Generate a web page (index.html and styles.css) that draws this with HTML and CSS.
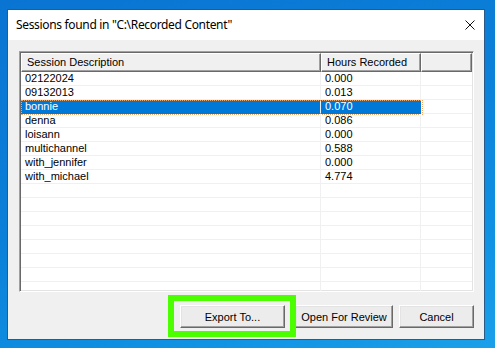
FILE: index.html
```html
<!DOCTYPE html>
<html>
<head>
<meta charset="utf-8">
<link rel="stylesheet" href="styles.css">
</head>
<body>
<div class="desktop">
  <div class="dialog">
    <div class="titlebar">
      <span class="title">Sessions found in "C:\Recorded Content"</span>
      <svg class="close" width="10" height="10" viewBox="0 0 10 10"><path d="M0.5 0.5 L9.5 9.5 M9.5 0.5 L0.5 9.5" stroke="#111" stroke-width="1" fill="none"/></svg>
    </div>
    <div class="client">
      <div class="listview">
        <div class="header">
          <div class="hcell c1">Session Description</div>
          <div class="hcell c2">Hours Recorded</div>
          <div class="hcell c3"></div>
        </div>
        <div class="rows">
          <div class="row"><div class="cell c1">02122024</div><div class="cell c2">0.000</div><div class="cell c3"></div></div>
          <div class="row"><div class="cell c1">09132013</div><div class="cell c2">0.013</div><div class="cell c3"></div></div>
          <div class="row selected"><div class="cell c1">bonnie</div><div class="cell c2">0.070</div><div class="cell c3"></div></div>
          <div class="row"><div class="cell c1">denna</div><div class="cell c2">0.086</div><div class="cell c3"></div></div>
          <div class="row"><div class="cell c1">loisann</div><div class="cell c2">0.000</div><div class="cell c3"></div></div>
          <div class="row"><div class="cell c1">multichannel</div><div class="cell c2">0.588</div><div class="cell c3"></div></div>
          <div class="row"><div class="cell c1">with_jennifer</div><div class="cell c2">0.000</div><div class="cell c3"></div></div>
          <div class="row"><div class="cell c1">with_michael</div><div class="cell c2">4.774</div><div class="cell c3"></div></div>
          <div class="row"><div class="cell c1"></div><div class="cell c2"></div><div class="cell c3"></div></div>
          <div class="row"><div class="cell c1"></div><div class="cell c2"></div><div class="cell c3"></div></div>
          <div class="row"><div class="cell c1"></div><div class="cell c2"></div><div class="cell c3"></div></div>
          <div class="row"><div class="cell c1"></div><div class="cell c2"></div><div class="cell c3"></div></div>
          <div class="row"><div class="cell c1"></div><div class="cell c2"></div><div class="cell c3"></div></div>
          <div class="row"><div class="cell c1"></div><div class="cell c2"></div><div class="cell c3"></div></div>
          <div class="row"><div class="cell c1"></div><div class="cell c2"></div><div class="cell c3"></div></div>
          <div class="row"><div class="cell c1"></div><div class="cell c2"></div><div class="cell c3"></div></div>
        </div>
      </div>
      <div class="buttons">
        <div class="highlight-wrap">
          <button class="btn export">Export To...</button>
          <div class="annot"></div>
        </div>
        <button class="btn review">Open For Review</button>
        <button class="btn cancel">Cancel</button>
      </div>
    </div>
  </div>
</div>
</body>
</html>
```

FILE: styles.css
```css
* { box-sizing: border-box; }
html, body { margin: 0; padding: 0; }
body {
  width: 495px;
  height: 348px;
  overflow: hidden;
  background: linear-gradient(160deg, #0a74d2 0%, #0b80d9 45%, #0f90e2 75%, #1aa0ea 100%);
}
.desktop { padding: 9px 0 0 7px; }
.dialog {
  width: 478px;
  height: 331px;
  border: 1px solid #2b5a86;
  background: #f0f0f0;
  display: flex;
  flex-direction: column;
}
.titlebar {
  height: 30px;
  background: #ffffff;
  display: flex;
  align-items: center;
  justify-content: space-between;
  padding: 0 9px 0 8px;
}
.title {
  font-family: "Noto Sans", "Open Sans", sans-serif;
  font-size: 12px;
  letter-spacing: -0.33px;
  color: #000;
  margin-top: -1px;
}
.close { display: block; }
.client {
  flex: 1;
  display: flex;
  flex-direction: column;
  padding: 11px 10px 11px 11px;
  font-family: "Liberation Sans", Arial, sans-serif;
  font-size: 11px;
  color: #000;
}
.listview {
  height: 241px;
  border: 1px solid;
  border-color: #a0a0a0 #ffffff #ffffff #a0a0a0;
  box-shadow: inset 1px 1px 0 #696969, inset -1px -1px 0 #e3e3e3;
  background: #fff;
  padding: 1px;
  overflow: hidden;
}
.header {
  display: flex;
  height: 19px;
  background: #f0f0f0;
}
.hcell {
  height: 19px;
  line-height: 17px;
  padding-left: 5px;
  border-top: 1px solid #ffffff;
  border-left: 1px solid #ffffff;
  border-right: 1px solid #696969;
  border-bottom: 1px solid #696969;
  box-shadow: inset -1px -1px 0 #a0a0a0;
  white-space: nowrap;
}
.c1 { width: 300px; }
.c2 { width: 100px; }
.c3 { flex: 1; }
.rows { display: flex; flex-direction: column; }
.row { display: flex; height: 14px; position: relative; }
.cell {
  height: 14px;
  line-height: 13px;
  padding-left: 4px;
  border-bottom: 1px solid #f0f0f0;
  border-right: 1px solid #f0f0f0;
  white-space: nowrap;
}
.cell.c3 { border-right: none; }
.row.selected .c1,
.row.selected .c2 {
  background: #0078d7;
  color: #fff;
  border-bottom-color: #0078d7;
}
.row.selected .c1 { border-right-color: #e8eef5; }
.row.selected .c2 { border-right-color: #0078d7; }
.row.selected::after {
  content: "";
  position: absolute;
  left: 0;
  top: 0;
  width: 400px;
  height: 13px;
  border: 1px dotted #e9a86a;
  pointer-events: none;
}
.buttons {
  margin-top: 13px;
  display: flex;
  justify-content: flex-end;
  align-items: flex-start;
  height: 23px;
}
.btn {
  height: 23px;
  font-family: "Liberation Sans", Arial, sans-serif;
  font-size: 11px;
  color: #000;
  background: #ececec;
  border: 1px solid;
  border-color: #ffffff #696969 #696969 #ffffff;
  box-shadow: inset -1px -1px 0 #a0a0a0, inset 1px 1px 0 #e3e3e3;
  padding: 0;
  display: block;
}
.highlight-wrap { position: relative; margin-right: 10px; }
.export { width: 105px; }
.review { width: 98px; margin-right: 6px; }
.cancel { width: 75px; }
.annot {
  position: absolute;
  left: -12px;
  top: -10px;
  width: 128px;
  height: 42px;
  border: 6px solid #4cff00;
}
```
